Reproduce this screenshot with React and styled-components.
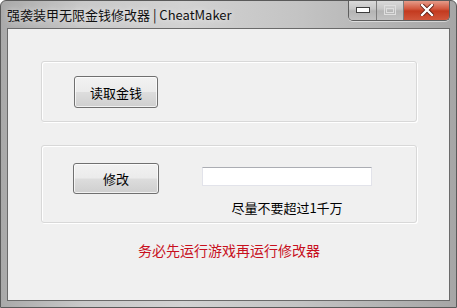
import React from 'react';
import styled, { createGlobalStyle } from 'styled-components';

const GlobalStyle = createGlobalStyle`
  html, body {
    margin: 0;
    padding: 0;
    background: #ffffff;
  }
  body {
    font-family: "Noto Sans CJK SC", "Noto Sans", sans-serif;
  }
`;

const Window = styled.div`
  width: 457px;
  height: 308px;
  box-sizing: border-box;
  display: flex;
  flex-direction: column;
  border: 1px solid #5a5a5a;
  border-radius: 6px 6px 0 0;
  background: linear-gradient(to right, #a9a9a9 0%, #c9c9c9 18%, #d2d2d2 40%, #c4c4c4 65%, #a6a6a6 100%);
  overflow: hidden;
`;

const TitleBar = styled.div`
  height: 27px;
  display: flex;
  align-items: flex-start;
  padding-left: 6px;
  padding-right: 6px;
`;

const Title = styled.div`
  font-size: 13px;
  line-height: 13px;
  margin-top: 7px;
  color: #101010;
  white-space: nowrap;
  text-shadow: 0 0 6px rgba(255, 255, 255, 0.8);
`;

const Caption = styled.div`
  margin-left: auto;
  margin-top: -1px;
  display: flex;
  height: 20px;
  border: 1px solid #5e5e5e;
  border-top: none;
  border-radius: 0 0 5px 5px;
  overflow: hidden;
  box-shadow: 0 1px 0 rgba(255, 255, 255, 0.5);
`;

const CapButton = styled.div`
  width: ${p => p.w}px;
  height: 100%;
  display: flex;
  align-items: center;
  justify-content: center;
  border-left: ${p => (p.first ? 'none' : '1px solid #7c7c7c')};
  background: ${p =>
    p.close
      ? 'linear-gradient(#e8a493 0%, #d2563d 45%, #c33a1f 55%, #d1563b 100%)'
      : 'linear-gradient(#dcdcdc 0%, #c6c6c6 45%, #b4b4b4 55%, #c2c2c2 100%)'};
`;

const Client = styled.div`
  flex: 1;
  margin: 0 6px 6px 6px;
  border: 1px solid #6a6a6a;
  background: #f0f0f0;
  display: flex;
  flex-direction: column;
  padding: 32px 32px 0 33px;
`;

const GroupBox = styled.div`
  height: ${p => p.h}px;
  box-sizing: border-box;
  border: 1px solid #d8d8d8;
  border-radius: 3px;
  box-shadow: inset 1px 1px 0 #ffffff, 1px 1px 0 #ffffff;
  margin-bottom: ${p => p.mb || 0}px;
  display: flex;
  align-items: flex-start;
  padding: ${p => p.pad};
`;

const Button = styled.button`
  width: ${p => p.w}px;
  height: ${p => p.h}px;
  border: 1px solid #707070;
  border-radius: 3px;
  background: linear-gradient(#f2f2f2 0%, #ebebeb 49%, #dddddd 51%, #cfcfcf 100%);
  box-shadow: inset 0 0 0 1px rgba(255, 255, 255, 0.7);
  font-family: "Noto Sans CJK SC", sans-serif;
  font-size: 13px;
  color: #000;
  padding: 0;
`;

const FieldColumn = styled.div`
  margin-left: 43px;
  margin-top: 4px;
  display: flex;
  flex-direction: column;
  align-items: center;
`;

const TextBox = styled.input`
  width: 170px;
  height: 19px;
  box-sizing: border-box;
  border: 1px solid #e2e3ea;
  border-top-color: #abadb3;
  background: #ffffff;
  outline: none;
`;

const Hint = styled.div`
  margin-top: 14px;
  font-size: 13px;
  line-height: 15px;
  color: #000;
`;

const Warning = styled.div`
  margin-top: 19px;
  text-align: center;
  font-size: 14px;
  line-height: 16px;
  color: #c8101e;
`;

function App() {
  return (
    <>
      <GlobalStyle />
      <Window>
        <TitleBar>
          <Title>强袭装甲无限金钱修改器 | CheatMaker</Title>
          <Caption>
            <CapButton w={27} first>
              <svg width="14" height="6" viewBox="0 0 14 6">
                <rect x="0.5" y="0.5" width="13" height="5" fill="#ffffff" stroke="#3d3d3d" />
              </svg>
            </CapButton>
            <CapButton w={26}>
              <svg width="12" height="10" viewBox="0 0 12 10">
                <rect x="0.5" y="0.5" width="11" height="9" fill="none" stroke="#dedede" />
                <rect x="2.5" y="3.5" width="7" height="4" fill="none" stroke="#dedede" />
              </svg>
            </CapButton>
            <CapButton w={45} close>
              <svg width="14" height="12" viewBox="0 0 14 12">
                <path d="M2 1 L12 11 M12 1 L2 11" stroke="#5a1a10" strokeWidth="4" strokeLinecap="square" />
                <path d="M2 1 L12 11 M12 1 L2 11" stroke="#ffffff" strokeWidth="2.4" strokeLinecap="square" />
              </svg>
            </CapButton>
          </Caption>
        </TitleBar>
        <Client>
          <GroupBox h={61} mb={23} pad="14px 0 0 32px">
            <Button w={84} h={32}>读取金钱</Button>
          </GroupBox>
          <GroupBox h={78} pad="17px 0 0 31px">
            <Button w={86} h={31}>修改</Button>
            <FieldColumn>
              <TextBox />
              <Hint>尽量不要超过1千万</Hint>
            </FieldColumn>
          </GroupBox>
          <Warning>务必先运行游戏再运行修改器</Warning>
        </Client>
      </Window>
    </>
  );
}

export default App;
